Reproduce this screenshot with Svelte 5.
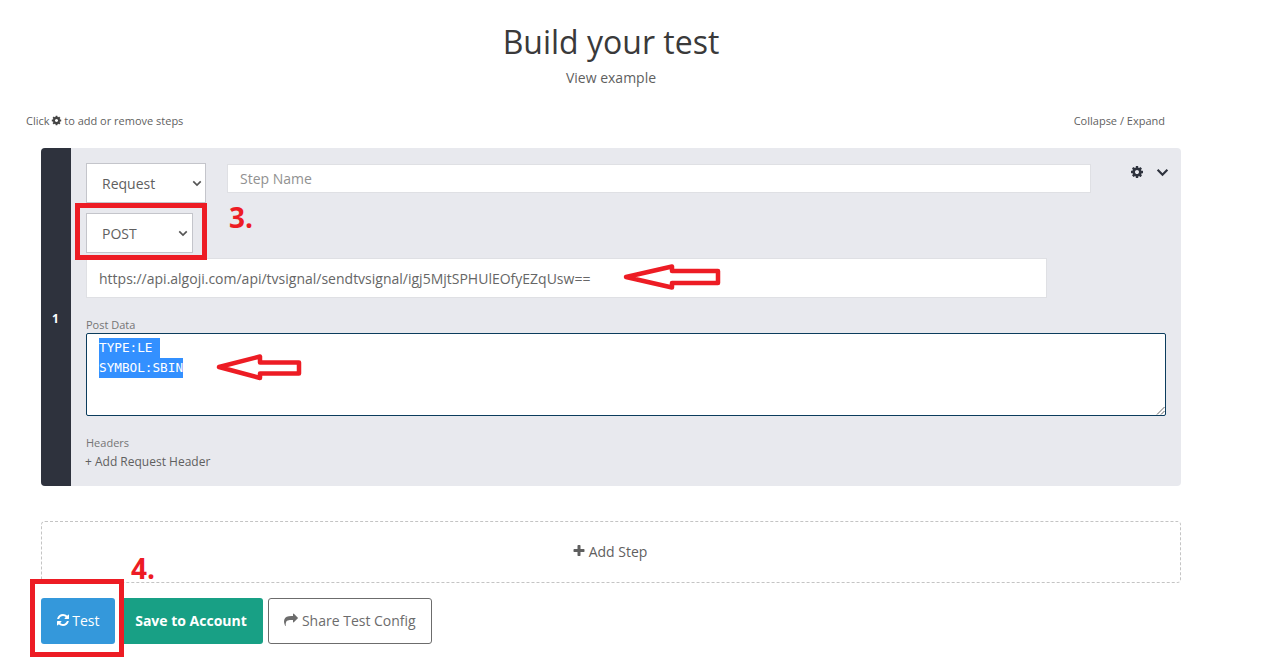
<script>
  const gear = "M1152 896q0-106-75-181t-181-75-181 75-75 181 75 181 181 75 181-75 75-181zm512-109v222q0 12-8 23t-20 13l-185 28q-19 54-39 91 35 50 107 138 10 12 10 25t-9 23q-27 37-99 108t-94 71q-12 0-26-9l-138-108q-44 23-91 38-16 136-29 186-7 28-36 28h-222q-14 0-24.500-8.500t-11.500-21.500l-28-184q-49-16-90-37l-141 107q-10 9-25 9-14 0-25-11-126-114-165-168-7-10-7-23 0-12 8-23 15-21 51-66.500t54-70.500q-27-50-41-99l-183-27q-13-2-21-12.500t-8-23.500v-222q0-12 8-23t19-13l186-28q14-46 39-92-40-57-107-138-10-12-10-24 0-10 9-23 26-36 98.500-107.500t94.500-71.500q13 0 26 10l138 107q44-23 91-38 16-136 29-186 7-28 36-28h222q14 0 24.500 8.500t11.500 21.500l28 184q49 16 90 37l142-107q9-9 24-9 13 0 25 10 129 119 165 170 7 8 7 22 0 12-8 23-15 21-51 66.500t-54 70.500q26 50 41 98l183 28q13 2 21 12.500t8 23.500z";
  const refresh = "M1639 1056q0 5-1 7-64 268-268 434.500t-478 166.500q-146 0-282.500-55t-243.500-157l-129 129q-19 19-45 19t-45-19-19-45v-448q0-26 19-45t45-19h448q26 0 45 19t19 45-19 45l-137 137q71 66 161 102t187 36q134 0 250-65t186-179q11-17 53-117 8-23 30-23h192q13 0 22.500 9.500t9.500 22.500zm25-800v448q0 26-19 45t-45 19h-448q-26 0-45-19t-19-45 19-45l138-138q-148-137-349-137-134 0-250 65t-186 179q-11 17-53 117-8 23-30 23h-199q-13 0-22.500-9.500t-9.500-22.500v-7q65-268 270-434.500t480-166.500q146 0 284 55.500t245 156.500l130-129q19-19 45-19t45 19 19 45z";
  const share = "M1792 640q0 26-19 45l-512 512q-19 19-45 19t-45-19-19-45v-256h-224q-98 0-175.500 6t-154 21.500-133 42.500-105.500 69.500-79 103-48 143-17 187q0 56 5 125 0 6 2.500 23.500t2.500 26.500q0 15-8.500 25t-23.500 10q-16 0-28-17-7-9-13-22t-13.500-30-10.500-24q-127-285-127-451 0-199 53-333 162-403 875-403h224v-256q0-26 19-45t45-19 45 19l512 512q19 19 19 45z";
  const plus = "M1600 736v192q0 40-28 68t-68 28h-416v416q0 40-28 68t-68 28h-192q-40 0-68-28t-28-68v-416h-416q-40 0-68-28t-28-68v-192q0-40 28-68t68-28h416v-416q0-40 28-68t68-28h192q40 0 68 28t28 68v416h416q40 0 68 28t28 68z";
</script>

<div class="page">
  <header>
    <h1>Build your test</h1>
    <p class="sub">View example</p>
  </header>

  <div class="hints">
    <span>Click <svg class="ico gear-hint" viewBox="0 0 1792 1792"><path d={gear} /></svg> to add or remove steps</span>
    <span>Collapse / Expand</span>
  </div>

  <section class="step">
    <div class="num"><span>1</span></div>
    <div class="body">
      <div class="top">
        <div class="select wide">
          <span>Request</span>
          <svg viewBox="0 0 12 8"><path d="M1.500 1.500 6 6l4.500-4.500" /></svg>
        </div>
        <div class="input name">Step Name</div>
        <div class="tools">
          <svg class="cog" viewBox="0 0 1792 1792"><path d={gear} /></svg>
          <svg class="chev" viewBox="0 0 12 8"><path d="M1.500 1.500 6 6l4.500-4.500" /></svg>
        </div>
      </div>
      <div class="select narrow">
        <span>POST</span>
        <svg viewBox="0 0 12 8"><path d="M1.500 1.500 6 6l4.500-4.500" /></svg>
      </div>
      <div class="input url">https://api.algoji.com/api/tvsignal/sendtvsignal/igj5MjtSPHUlEOfyEZqUsw==</div>
      <div class="label post">Post Data</div>
      <div class="area">
        <div class="line first"><span class="sel">{"TYPE:LE "}</span></div>
        <div class="line"><span class="sel">SYMBOL:SBIN</span></div>
        <svg class="grip" viewBox="0 0 10 10"><path d="M9.500 2 2 9.500M9.500 6 6 9.500" /></svg>
      </div>
      <div class="label headers">Headers</div>
      <div class="add-header">+ Add Request Header</div>
    </div>
  </section>

  <div class="add-step">
    <svg class="ico" viewBox="0 0 1792 1792"><path d={plus} /></svg> Add Step
  </div>

  <div class="actions">
    <button class="btn test"><svg class="ico" viewBox="0 0 1792 1792"><path d={refresh} /></svg> Test</button>
    <button class="btn save">Save to Account</button>
    <button class="btn config"><svg class="ico" viewBox="0 0 1792 1792"><path d={share} /></svg> Share Test Config</button>
  </div>

  <!-- red markup drawn on top of the screenshot -->
  <svg class="marks" width="1264" height="669" viewBox="0 0 1264 669">
    <rect x="77.500" y="205.500" width="127" height="52" />
    <rect x="32.500" y="581.500" width="89" height="73" />
    <path d="M626 277 672 266.500V271H718V283H672V287.500Z" />
    <path d="M219 367 260 356.500V362.500H299V373.500H260V378Z" />
  </svg>
  <span class="tag three">3.</span>
  <span class="tag four">4.</span>
</div>

<style>
  :global(body) {
    margin: 0;
    background: #fff;
  }

  .page {
    position: relative;
    width: 1140px;
    height: 669px;
    padding: 23px 0 0 41px;
    overflow: hidden;
    font-family: "Open Sans", sans-serif;
    font-size: 14px;
    color: #5f5f5f;
  }

  header {
    text-align: center;
  }

  h1 {
    margin: -1px 0 0;
    font-size: 32px;
    font-weight: 400;
    line-height: 40px;
    color: #3a3a3a;
  }

  .sub {
    margin: 6px 0 0;
    line-height: 20px;
    color: #5f5f5f;
  }

  .hints {
    display: flex;
    justify-content: space-between;
    margin: 25px 16px 0 -15px;
    font-size: 11px;
    line-height: 16px;
    color: #5f5f5f;
  }

  .ico {
    display: inline-block;
    width: 1em;
    height: 1em;
    vertical-align: -0.125em;
    fill: currentColor;
  }

  .gear-hint {
    margin: 0 -1px;
    color: #444;
  }

  .step {
    display: flex;
    height: 338px;
    margin-top: 19px;
    border-radius: 4px;
    background: #e8e9ee;
  }

  .num {
    display: flex;
    flex: none;
    align-items: center;
    justify-content: center;
    width: 30px;
    border-radius: 4px 0 0 4px;
    background: #2e323d;
    font-size: 12px;
    font-weight: 700;
    color: #fff;
  }

  .num span {
    margin: 3px 1px 0 0;
  }

  .body {
    flex: 1;
    padding: 15px 15px 0;
  }

  .top {
    display: flex;
    align-items: flex-start;
  }

  .select {
    display: flex;
    align-items: center;
    justify-content: space-between;
    box-sizing: border-box;
    height: 40px;
    padding: 0 3px 0 15px;
    border: 1px solid #c4c5cb;
    background: #fff;
    color: #5f5f5f;
  }

  .select svg {
    width: 10px;
    height: 7px;
    fill: none;
    stroke: #555;
    stroke-width: 2;
  }

  .wide {
    flex: none;
    width: 120px;
  }

  .narrow {
    width: 107px;
    margin-top: 10px;
    padding-right: 4px;
  }

  .input {
    box-sizing: border-box;
    border: 1px solid #dfe0e4;
    background: #fff;
  }

  .name {
    flex: none;
    width: 864px;
    height: 29px;
    margin: 1px 0 0 21px;
    padding: 0 12px;
    line-height: 27px;
    color: #919191;
  }

  .tools {
    display: flex;
    align-items: center;
    gap: 12px;
    margin: 2px 0 0 39px;
  }

  .cog {
    width: 14px;
    height: 14px;
    fill: #2e323d;
  }

  .chev {
    width: 13px;
    height: 9px;
    fill: none;
    stroke: #2e323d;
    stroke-width: 2;
  }

  .url {
    width: 961px;
    height: 40px;
    margin-top: 5px;
    padding: 0 12px;
    line-height: 40px;
    color: #666;
  }

  .label {
    font-size: 11px;
    line-height: 16px;
    color: #757575;
  }

  .post {
    margin-top: 19px;
  }

  .area {
    position: relative;
    box-sizing: border-box;
    width: 1080px;
    height: 83px;
    margin-top: 0;
    padding: 4px 12px 0;
    border: 1px solid #0b3c5d;
    border-radius: 2px;
    background: #fff;
    font-family: "DejaVu Sans Mono", monospace;
    font-size: 12.700px;
  }

  .line {
    height: 20px;
    line-height: 20px;
    white-space: pre;
  }

  .sel {
    display: inline-block;
    background: #3390ff;
    color: #fff;
  }

  .grip {
    position: absolute;
    right: 0;
    bottom: 0;
    width: 10px;
    height: 10px;
    fill: none;
    stroke: #666;
    stroke-width: 1;
  }

  .headers {
    margin-top: 19px;
  }

  .add-header {
    margin: 2px 0 0 -1px;
    font-size: 12px;
    line-height: 18px;
    color: #5f5f5f;
  }

  .add-step {
    display: flex;
    align-items: center;
    justify-content: center;
    gap: 3px;
    box-sizing: border-box;
    height: 62px;
    margin-top: 35px;
    padding: 0 3px 2px 0;
    border: 1px dashed #c4c4c4;
    border-radius: 4px;
    color: #5f5f5f;
  }

  .actions {
    display: flex;
    gap: 4px;
    margin-top: 15px;
  }

  .btn {
    box-sizing: border-box;
    height: 46px;
    padding: 0 0 2px;
    border: 1px solid transparent;
    border-radius: 3px;
    font-family: inherit;
    font-size: 14px;
  }

  .test {
    width: 74px;
    padding-right: 1px;
    background: #3498db;
    color: #fff;
    word-spacing: -1px;
  }

  .save {
    width: 144px;
    background: #18a085;
    font-weight: 700;
    color: #fff;
  }

  .config {
    width: 164px;
    margin-left: 1px;
    border-color: #6c6c6c;
    background: #fff;
    color: #6c6c6c;
  }

  .marks {
    position: absolute;
    top: 0;
    left: 0;
    pointer-events: none;
    fill: none;
    stroke: #ed1c24;
  }

  .marks rect {
    stroke-width: 5;
  }

  .marks path {
    stroke-width: 4.500;
    stroke-linejoin: round;
  }

  .tag {
    position: absolute;
    font-size: 28px;
    font-weight: 700;
    line-height: 30px;
    color: #ed1c24;
  }

  .three {
    top: 202px;
    left: 229px;
  }

  .four {
    top: 553px;
    left: 131px;
  }
</style>
